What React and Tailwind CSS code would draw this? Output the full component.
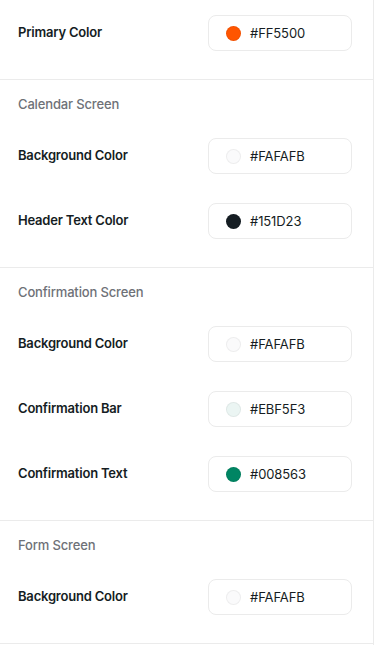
const sections = [
  {
    title: null,
    rows: [{ label: 'Primary Color', value: '#FF5500' }],
  },
  {
    title: 'Calendar Screen',
    rows: [
      { label: 'Background Color', value: '#FAFAFB' },
      { label: 'Header Text Color', value: '#151D23' },
    ],
  },
  {
    title: 'Confirmation Screen',
    rows: [
      { label: 'Background Color', value: '#FAFAFB' },
      { label: 'Confirmation Bar', value: '#EBF5F3' },
      { label: 'Confirmation Text', value: '#008563' },
    ],
  },
  {
    title: 'Form Screen',
    rows: [{ label: 'Background Color', value: '#FAFAFB' }],
  },
]

function ColorField({ value }) {
  return (
    <div className="flex h-[36px] w-[144px] items-center gap-[9px] rounded-lg border border-[#ebebeb] bg-white pl-[17px]">
      <span
        className="h-[15px] w-[15px] shrink-0 rounded-full border border-black/5"
        style={{ backgroundColor: value }}
      />
      <span className="text-[13px] leading-none tracking-[-0.1px] text-[#151d23]">{value}</span>
    </div>
  )
}

function Row({ label, value }) {
  return (
    <div className="flex items-center justify-between">
      <span className="-mt-[2px] text-[13px] font-semibold leading-5 tracking-[-0.2px] text-[#151d23]">
        {label}
      </span>
      <ColorField value={value} />
    </div>
  )
}

export default function App() {
  return (
    <div
      className="h-[645px] w-[374px] border-r border-[#ebebeb] bg-white"
      style={{ fontFamily: 'Inter, "Noto Sans", sans-serif' }}
    >
      {sections.map((section, i) => (
        <div
          key={i}
          className={`border-b border-[#ebebeb] pb-[28px] pl-[18px] pr-[21px] ${section.title ? 'pt-[14px]' : 'pt-[15px]'}`}
        >
          {section.title && (
            <div className="mb-[24px] text-[13px] font-medium leading-5 tracking-[-0.15px] text-[#6e7177]">
              {section.title}
            </div>
          )}
          <div className="flex flex-col gap-[29px]">
            {section.rows.map((row, j) => (
              <Row key={j} {...row} />
            ))}
          </div>
        </div>
      ))}
    </div>
  )
}
